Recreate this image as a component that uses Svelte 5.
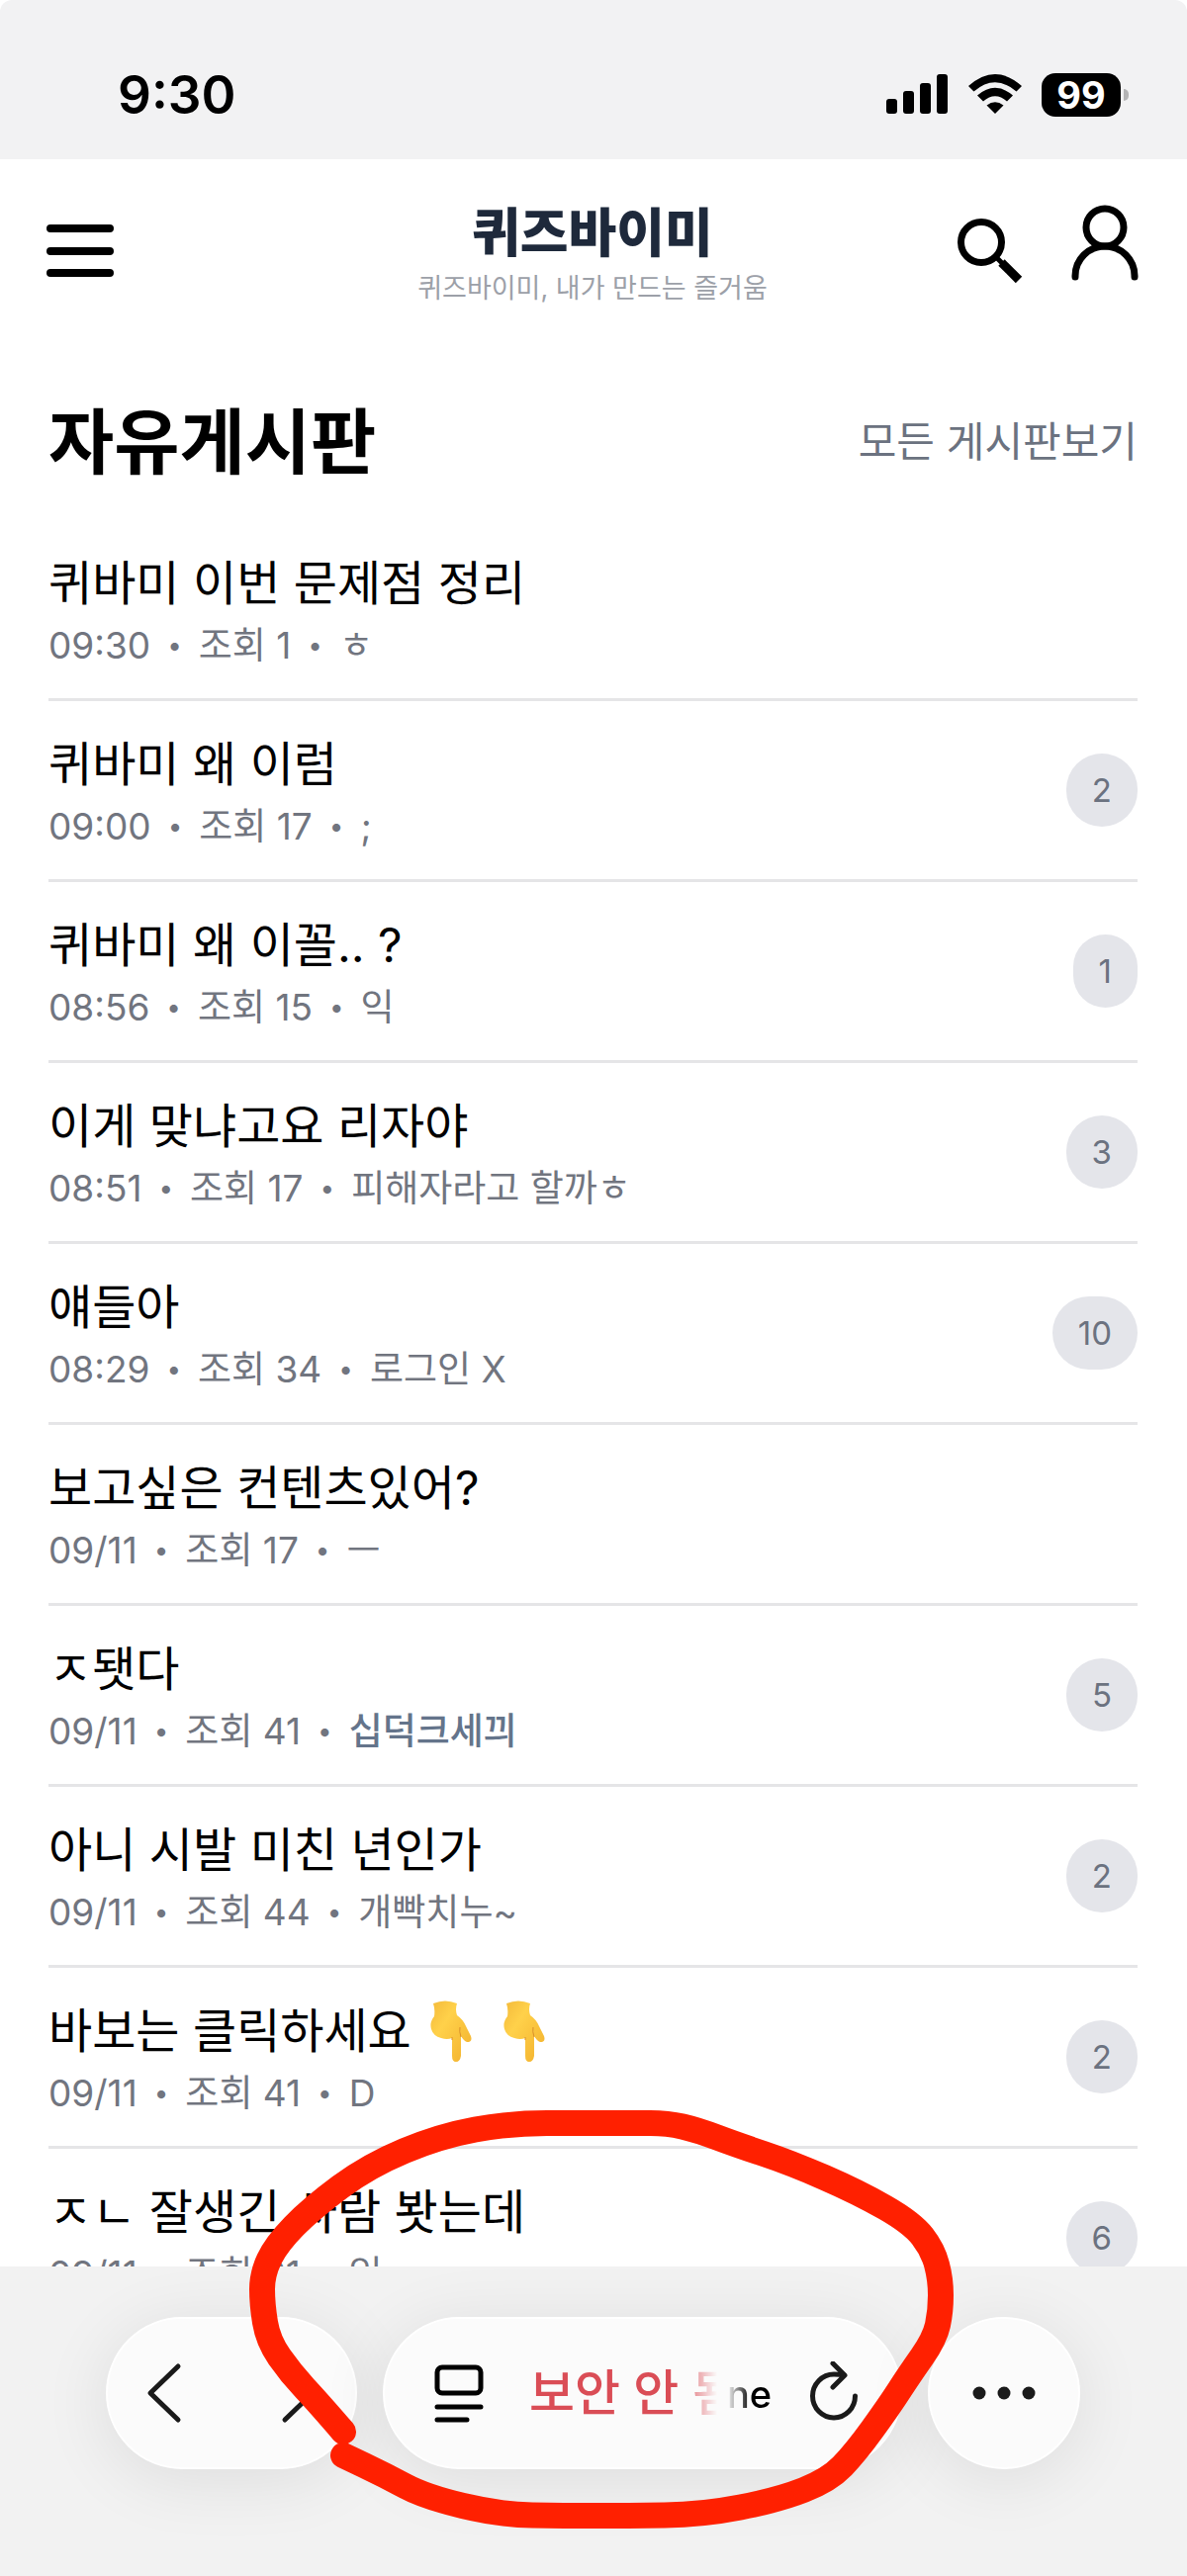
<script lang="ts">
  type Post = {
    title: string;
    time: string;
    views: number;
    author: string;
    member?: boolean;
    hands?: number;
    comments?: number;
  };

  const posts: Post[] = [
    { title: "퀴바미 이번 문제점 정리", time: "09:30", views: 1, author: "ㅎ" },
    { title: "퀴바미 왜 이럼", time: "09:00", views: 17, author: ";", comments: 2 },
    { title: "퀴바미 왜 이꼴.. ?", time: "08:56", views: 15, author: "익", comments: 1 },
    { title: "이게 맞냐고요 리자야", time: "08:51", views: 17, author: "피해자라고 할까ㅎ", comments: 3 },
    { title: "얘들아", time: "08:29", views: 34, author: "로그인 X", comments: 10 },
    { title: "보고싶은 컨텐츠있어?", time: "09/11", views: 17, author: "ㅡ" },
    { title: "ㅈ됏다", time: "09/11", views: 41, author: "십덕크세끠", member: true, comments: 5 },
    { title: "아니 시발 미친 년인가", time: "09/11", views: 44, author: "개빡치누~", comments: 2 },
    { title: "바보는 클릭하세요", time: "09/11", views: 41, author: "D", hands: 2, comments: 2 },
    { title: "ㅈㄴ 잘생긴 사람 봣는데", time: "09/11", views: 61, author: "익", comments: 6 },
  ];

  // hand-drawn marker ring, in the units of its own viewBox
  const marker = [
    [347, 459], [322, 430], [294, 400], [271, 367], [265, 330], [265, 300], [279, 270],
    [315, 233], [373, 190], [445, 160], [516, 147], [590, 147], [640, 147], [675, 147],
    [705, 154], [745, 169], [799, 187], [868, 217], [922, 248], [943, 275], [951, 305],
    [951, 337], [945, 365], [919, 402], [899, 433], [865, 480], [838, 508], [787, 528],
    [710, 543], [634, 544], [570, 544], [506, 543], [430, 525], [389, 503], [347, 483],
  ];

  function smooth(pts: number[][]) {
    let d = `M${pts[0]}`;
    for (let i = 1; i < pts.length - 1; i++) {
      const [x, y] = pts[i];
      const [nx, ny] = pts[i + 1];
      d += ` Q${x},${y} ${(x + nx) / 2},${(y + ny) / 2}`;
    }
    return `${d} L${pts[pts.length - 1]}`;
  }
</script>

<div class="phone">
  <div class="status">
    <span class="clock">9:30</span>
    <div class="indicators">
      <svg width="64" height="42" viewBox="0 0 64 42" aria-hidden="true">
        <rect x="1" y="25" width="11" height="15" rx="3" />
        <rect x="18" y="17" width="11" height="23" rx="3" />
        <rect x="35" y="9" width="11" height="31" rx="3" />
        <rect x="52" y="0" width="11" height="40" rx="3" />
      </svg>
      <svg width="54" height="42" viewBox="0 0 54 42" aria-hidden="true">
        <path d="M0 12Q27 -12 54 12L48.500 17.500Q27 -1 5.500 17.500Z" />
        <path d="M9 21.500Q27 6 45 21.500L39 27.500Q27 17 15 27.500Z" />
        <path d="M18.500 31.500Q27 25 35.500 31.500L27 40Z" />
      </svg>
      <div class="battery"><span>99</span></div>
    </div>
  </div>

  <header>
    <button class="icon" aria-label="메뉴">
      <svg width="68" height="60" viewBox="0 0 68 60" fill="none" stroke="#000" stroke-width="8" stroke-linecap="round">
        <path d="M4 7H64M4 30H64M4 52H64" />
      </svg>
    </button>
    <a class="brand" href="/">
      <strong>퀴즈바이미</strong>
      <small>퀴즈바이미, 내가 만드는 즐거움</small>
    </a>
    <div class="tools">
      <button class="icon" aria-label="검색">
        <svg width="68" height="82" viewBox="0 0 68 82" fill="none" stroke="#000">
          <circle cx="26" cy="40" r="20.500" stroke-width="7" />
          <path d="M41 55L48 62" stroke-width="5" />
          <path d="M46.500 60.500L64 78" stroke-width="9" />
        </svg>
      </button>
      <button class="icon" aria-label="내 정보">
        <svg width="68" height="82" viewBox="0 0 68 82" fill="none" stroke="#000" stroke-width="7" stroke-linecap="round">
          <circle cx="34" cy="25" r="19" />
          <path d="M4 75V74A30 30 0 0 1 64 74V75" />
        </svg>
      </button>
    </div>
  </header>

  <main>
    <div class="board-head">
      <h1>자유게시판</h1>
      <a href="/boards">모든 게시판보기</a>
    </div>
    <ul>
      {#each posts as post}
        <li>
          <a class="post" href="/board">
            <span class="title">
              {post.title}
              {#each Array(post.hands ?? 0) as _}
                <svg width="62" height="62" viewBox="0 0 62 62" role="img" aria-label="아래를 가리키는 손">
                  <defs>
                    <linearGradient id="skin" x1="0" y1="0" x2="1" y2="1">
                      <stop offset="0" stop-color="#f3b93a" />
                      <stop offset="0.35" stop-color="#ffd14a" />
                      <stop offset="1" stop-color="#f2b02c" />
                    </linearGradient>
                  </defs>
                  <path fill="url(#skin)" d="M10 3Q22 -2 34 3Q32 9 34 15Q40 19 43 26L48 36Q50 42 44 42Q41 41 38 36V56Q37 62 33 62Q29 62 29 56V38Q24 40 18 38Q10 36 8 29Q6 22 11 16Q12 9 10 3Z" />
                  <path fill="none" stroke="#d9902a" stroke-width="1" d="M29 40V37M38 37Q36 31 37 27" />
                </svg>
              {/each}
            </span>
            <span class="meta">
              <span>{post.time}</span>
              <i>•</i>
              <span>조회 {post.views}</span>
              <i>•</i>
              <span class:member={post.member}>{post.author}</span>
            </span>
          </a>
          {#if post.comments}
            <span class="count">{post.comments}</span>
          {/if}
        </li>
      {/each}
    </ul>
  </main>

  <nav>
    <div class="pill history">
      <button class="icon" aria-label="뒤로">
        <svg width="40" height="64" viewBox="0 0 40 64" fill="none" stroke="#1a1a1a" stroke-width="5" stroke-linecap="round" stroke-linejoin="round">
          <path d="M34 5L6 32L34 59" />
        </svg>
      </button>
      <button class="icon" aria-label="앞으로">
        <svg width="40" height="64" viewBox="0 0 40 64" fill="none" stroke="#1a1a1a" stroke-width="5" stroke-linecap="round" stroke-linejoin="round">
          <path d="M6 5L34 32L6 59" />
        </svg>
      </button>
    </div>
    <div class="pill address">
      <button class="icon" aria-label="페이지 메뉴">
        <svg width="50" height="60" viewBox="0 0 50 60" fill="none" stroke="#000" stroke-width="5" stroke-linecap="round">
          <rect x="3" y="4" width="44" height="26" rx="5" />
          <path d="M3 44H47M3 57H33" />
        </svg>
      </button>
      <span class="warning">보안 안 됨</span>
      <span class="domain">ne</span>
      <button class="icon" aria-label="새로고침">
        <svg width="50" height="64" viewBox="0 0 50 64" fill="none" stroke="#1a1a1a" stroke-width="5" stroke-linecap="round" stroke-linejoin="round">
          <path d="M35 14Q31 13 25 13A21.500 22 0 1 0 46.500 35" />
          <path d="M24 2L36 14L24 26" />
        </svg>
      </button>
    </div>
    <button class="pill more" aria-label="더보기">
      <svg width="64" height="14" viewBox="0 0 64 14" fill="#1a1a1a">
        <circle cx="7" cy="7" r="6.500" />
        <circle cx="32" cy="7" r="6.500" />
        <circle cx="57" cy="7" r="6.500" />
      </svg>
    </button>
  </nav>

  <svg class="marker" viewBox="0 100 1200 505" aria-hidden="true">
    <path d={smooth(marker)} />
  </svg>
</div>

<style>
  :global(body) {
    background: #fff;
  }
  .phone {
    position: relative;
    display: flex;
    flex-direction: column;
    height: 100vh;
    overflow: hidden;
    font-family: Inter, "Noto Sans CJK KR", sans-serif;
    color: #000;
  }
  a {
    color: inherit;
    text-decoration: none;
  }
  .icon {
    display: flex;
    padding: 0;
    background: none;
    border: none;
    cursor: pointer;
  }
  .status {
    display: flex;
    flex: none;
    align-items: center;
    justify-content: space-between;
    height: 161px;
    padding: 30px 59px 0 119px;
    box-sizing: border-box;
    background: #f2f2f3;
    border-radius: 12px 12px 0 0;
  }
  .clock {
    font-size: 53px;
    font-weight: 600;
    line-height: 64px;
  }
  .indicators {
    display: flex;
    align-items: center;
    gap: 20px;
  }
  .battery {
    position: relative;
    display: grid;
    place-items: center;
    width: 80px;
    height: 44px;
    margin-right: 8px;
    background: #000;
    border-radius: 14px;
    font-size: 38px;
    font-weight: 700;
    line-height: 44px;
    color: #fff;
  }
  .battery::after {
    content: "";
    position: absolute;
    top: 16px;
    right: -8px;
    width: 5px;
    height: 12px;
    background: #b4b4b5;
    border-radius: 0 5px 5px 0;
  }
  header {
    display: grid;
    grid-template-columns: 1fr auto 1fr;
    flex: none;
    align-items: center;
    height: 186px;
    padding: 0 49px 0 47px;
    box-sizing: border-box;
  }
  .brand {
    display: flex;
    flex-direction: column;
    align-items: center;
    padding-top: 12px;
  }
  .brand strong {
    font-size: 53px;
    font-weight: 900;
    line-height: 64px;
    color: #1e293b;
  }
  .brand small {
    font-size: 27px;
    line-height: 48px;
    color: #9ca0a8;
  }
  .tools {
    display: flex;
    justify-content: flex-end;
    gap: 49px;
    padding-bottom: 16px;
  }
  main {
    flex: 1;
    min-height: 0;
    padding: 0 50px 0 49px;
    overflow: hidden;
  }
  .board-head {
    display: flex;
    align-items: center;
    justify-content: space-between;
    height: 179px;
    padding-bottom: 20px;
    box-sizing: border-box;
  }
  h1 {
    margin: 0;
    padding-top: 40px;
    font-size: 72px;
    font-weight: 700;
    line-height: 104px;
  }
  .board-head a {
    padding-top: 40px;
    font-size: 42px;
    line-height: 64px;
    color: #6b7280;
  }
  ul {
    margin: 0;
    padding: 0;
    list-style: none;
  }
  li {
    display: flex;
    align-items: center;
    justify-content: space-between;
    height: 180px;
    border-bottom: 3px solid #e5e5e7;
  }
  .post {
    padding-top: 2px;
  }
  .title {
    display: flex;
    align-items: center;
    gap: 12px;
    font-size: 48px;
    line-height: 72px;
  }
  .meta {
    display: flex;
    gap: 17px;
    font-size: 37px;
    line-height: 54px;
    color: #71757f;
  }
  .meta i {
    font-size: 26px;
    font-style: normal;
  }
  .member {
    font-weight: 500;
    color: #64748b;
  }
  .count {
    padding: 0 26px;
    background: #e4e5ea;
    border-radius: 37px;
    font-size: 33px;
    line-height: 74px;
    color: #6b7280;
  }
  nav {
    display: flex;
    flex: none;
    gap: 26px;
    padding: 51px 108px 108px 107px;
    background: #f2f2f2;
  }
  .pill {
    display: flex;
    align-items: center;
    height: 154px;
    box-sizing: border-box;
    background: #fbfbfb;
    border: 2px solid #fff;
    border-radius: 77px;
    box-shadow: 0 10px 70px rgb(0 0 0 / 9%);
  }
  .history {
    justify-content: space-between;
    width: 254px;
    padding: 0 37px;
  }
  .address {
    flex: 1;
    padding: 0 42px 0 50px;
  }
  .warning {
    width: 190px;
    margin-left: 46px;
    overflow: hidden;
    font-size: 50px;
    font-weight: 500;
    line-height: 72px;
    color: #da4d56;
    white-space: nowrap;
    mask-image: linear-gradient(90deg, #000 150px, transparent);
  }
  .domain {
    margin: 2px auto 0 10px;
    font-size: 38px;
    font-weight: 500;
    line-height: 48px;
    mask-image: linear-gradient(90deg, transparent, #000 24px);
  }
  .more {
    justify-content: center;
    width: 154px;
    padding: 0;
    cursor: pointer;
  }
  .marker {
    position: absolute;
    right: 0;
    bottom: 0;
    left: 0;
    width: 100%;
    pointer-events: none;
  }
  .marker path {
    fill: none;
    stroke: #ff2000;
    stroke-width: 26;
    stroke-linecap: round;
    stroke-linejoin: round;
  }
</style>
